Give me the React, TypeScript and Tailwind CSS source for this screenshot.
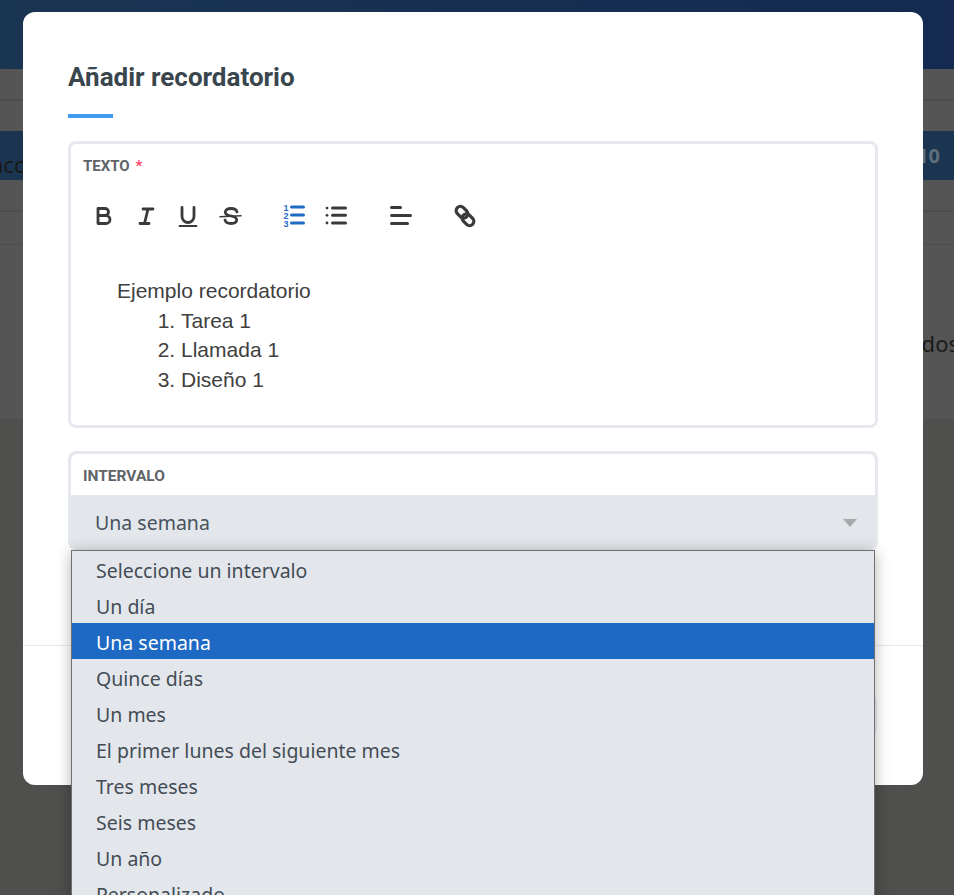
import React from 'react';

const intervalOptions = [
  'Seleccione un intervalo',
  'Un día',
  'Una semana',
  'Quince días',
  'Un mes',
  'El primer lunes del siguiente mes',
  'Tres meses',
  'Seis meses',
  'Un año',
  'Personalizado',
];

const iconClass = 'h-6 w-6 fill-none stroke-[#3a3a3a] stroke-[2.8]';

const BoldIcon = () => (
  <svg viewBox="0 0 24 24" className={iconClass} strokeLinecap="round" strokeLinejoin="round">
    <path d="M6 4.5h7a3.5 3.5 0 0 1 0 7H6zM6 11.5h8a4 4 0 0 1 0 8H6z" />
  </svg>
);
const ItalicIcon = () => (
  <svg viewBox="0 0 24 24" className={iconClass} strokeLinecap="round">
    <path d="M9 5h10M6 19.5h9M14 5l-3.5 14.5" />
  </svg>
);
const UnderlineIcon = () => (
  <svg viewBox="0 0 24 24" className={iconClass} strokeLinecap="round">
    <path d="M6 3.5v9a6 6 0 0 0 12 0v-9" />
    <path d="M3.5 22h17" strokeWidth="1.8" />
  </svg>
);
const StrikeIcon = () => (
  <svg viewBox="0 0 24 24" className={iconClass} strokeLinecap="round">
    <path d="M18 8c-.5-2.200-2.800-3.500-6-3.500-3.400 0-5.700 1.500-5.700 3.700 0 2 1.800 3 5.700 3.800 3.900.8 5.700 1.800 5.700 3.800 0 2.300-2.300 3.700-5.700 3.700-3.200 0-5.500-1.300-6-3.500" transform="translate(1 0)" />
    <path d="M2 12.800l21-1" strokeWidth="1.5" />
  </svg>
);
const OrderedIcon = () => (
  <svg viewBox="0 0 24 24" className="h-6 w-6" fill="#1f6cc4">
    <rect x="8" y="1.500" width="15" height="3" rx="1.500" />
    <rect x="8" y="9.500" width="15" height="3" rx="1.500" />
    <rect x="8" y="17.500" width="15" height="3" rx="1.500" />
    <text x="1.500" y="6.500" fontSize="9" fontWeight="700" fontFamily="Liberation Sans, sans-serif">1</text>
    <text x="1.500" y="14.500" fontSize="9" fontWeight="700" fontFamily="Liberation Sans, sans-serif">2</text>
    <text x="1.500" y="22.500" fontSize="9" fontWeight="700" fontFamily="Liberation Sans, sans-serif">3</text>
  </svg>
);
const BulletIcon = () => (
  <svg viewBox="0 0 24 24" className="h-6 w-6" fill="#3a3a3a">
    <rect x="7" y="2.600" width="16" height="3" rx="1.500" />
    <rect x="7" y="9.800" width="16" height="3" rx="1.500" />
    <rect x="7" y="17.500" width="16" height="3" rx="1.500" />
    <circle cx="3" cy="4.100" r="1.400" />
    <circle cx="3" cy="11.300" r="1.400" />
    <circle cx="3" cy="19" r="1.400" />
  </svg>
);
const AlignIcon = () => (
  <svg viewBox="0 0 24 24" className="h-6 w-6" fill="#3a3a3a">
    <rect x="2" y="2" width="12" height="3" rx="1.500" />
    <rect x="2" y="10" width="22" height="3" rx="1.500" />
    <rect x="2" y="18" width="19" height="3" rx="1.500" />
  </svg>
);
const LinkIcon = () => (
  <svg viewBox="0 0 24 24" className="h-6 w-6 fill-none stroke-[#3a3a3a] stroke-[3.2]">
    <rect x="2.500" y="4" width="13" height="8.500" rx="4.200" transform="rotate(45 9 8.250)" />
    <rect x="8.500" y="11.500" width="13" height="8.500" rx="4.200" transform="rotate(45 15 15.750)" />
  </svg>
);

export default function App() {
  return (
    <div className="relative h-screen w-full overflow-hidden bg-[#4f504e] font-['Noto_Sans',sans-serif]">
      {/* page behind the modal, dimmed */}
      <header className="h-[69px] bg-gradient-to-r from-[#1a3552] to-[#142a50]" />
      <div className="h-[350px] bg-[#555555]">
        <div className="h-[32px] border-b-2 border-[#4d4d4d]" />
        <div className="mt-[30px] flex h-[49px] items-center justify-end bg-[#1b3550] pr-[14px] text-xl font-bold text-[#5d6d7c]">
          10
        </div>
        <div className="h-[32px] border-b-2 border-[#4d4d4d]" />
        <div className="h-[33px] border-b border-[#4d4d4d]" />
        <p className="mt-[84px] -mr-[5px] text-right text-[22px] leading-7 text-[#1a1a1a]">dos</p>
      </div>
      <p className="absolute -left-[9px] top-[150px] text-[22px] leading-7 text-[#1a1a1a]">acc</p>

      {/* modal */}
      <div className="absolute left-[23px] top-[12px] h-[773px] w-[900px] rounded-xl bg-white">
        <div className="h-[633px] px-[45px] pt-[49px]">
          <h2 className="text-[26px] leading-8 font-bold text-[#3a464e] font-['Roboto',sans-serif]">Añadir recordatorio</h2>
          <div className="mt-[21px] h-1 w-[45px] bg-[#3f9bee]" />

          <div className="mt-[23px] h-[287px] rounded-lg border-[3px] border-[#e5e9ee] pl-3 pt-[12px]">
            <label className="block text-[15px] leading-5 font-bold text-[#5f6468] font-['Roboto',sans-serif]">
              TEXTO <span className="ml-[2px] text-[#ff4d67]">*</span>
            </label>
            <div className="mt-[28px] flex items-center pl-[9px]">
              <div className="flex gap-[18px]">
                <BoldIcon />
                <ItalicIcon />
                <UnderlineIcon />
                <StrikeIcon />
              </div>
              <div className="ml-[40px] flex gap-[18px]">
                <OrderedIcon />
                <BulletIcon />
              </div>
              <div className="ml-[40px]">
                <AlignIcon />
              </div>
              <div className="ml-[41px]">
                <LinkIcon />
              </div>
            </div>
            <div className="mt-[48px] pl-[34px] text-[21px] leading-[29.5px] text-[#404040] font-['Liberation_Sans',sans-serif]">
              <p>Ejemplo recordatorio</p>
              <ol className="list-decimal pl-[64px]">
                <li>Tarea 1</li>
                <li>Llamada 1</li>
                <li>Diseño 1</li>
              </ol>
            </div>
          </div>

          <div className="mt-[23px] rounded-lg border-[3px] border-b-0 border-[#e5e9ee] bg-[#e3e7ec]">
            <div className="h-[41px] rounded-t-md bg-white pl-3 pt-[12px]">
              <label className="block text-[15.500px] leading-5 font-bold text-[#5f6468] font-['Roboto',sans-serif]">INTERVALO</label>
            </div>
            <div className="flex h-[55px] items-center justify-between pl-6 pr-[18px] text-[19.500px] text-[#48525c]">
              <span>Una semana</span>
              <span className="h-0 w-0 border-x-[7px] border-t-[8px] border-x-transparent border-t-[#a6a8aa]" />
            </div>
          </div>
        </div>
        <div className="flex justify-end border-t border-[#e7e9ec] pr-[46px] pt-[47px]">
          <div className="h-[44px] w-[120px] rounded-lg bg-[#eceef1]" />
        </div>
      </div>

      {/* open select list */}
      <ul className="absolute left-[71px] top-[550px] w-[804px] border border-[#6f6f6f] bg-[#e3e7ec] text-[19.500px] text-[#434c55] shadow-[0_2px_14px_rgba(0,0,0,0.3)]">
        {intervalOptions.map(option => (
          <li
            key={option}
            className={`h-9 pl-6 pt-[2px] leading-9 ${option === 'Una semana' ? 'bg-[#1e69c3] text-white' : ''}`}
          >
            {option}
          </li>
        ))}
      </ul>
    </div>
  );
}
